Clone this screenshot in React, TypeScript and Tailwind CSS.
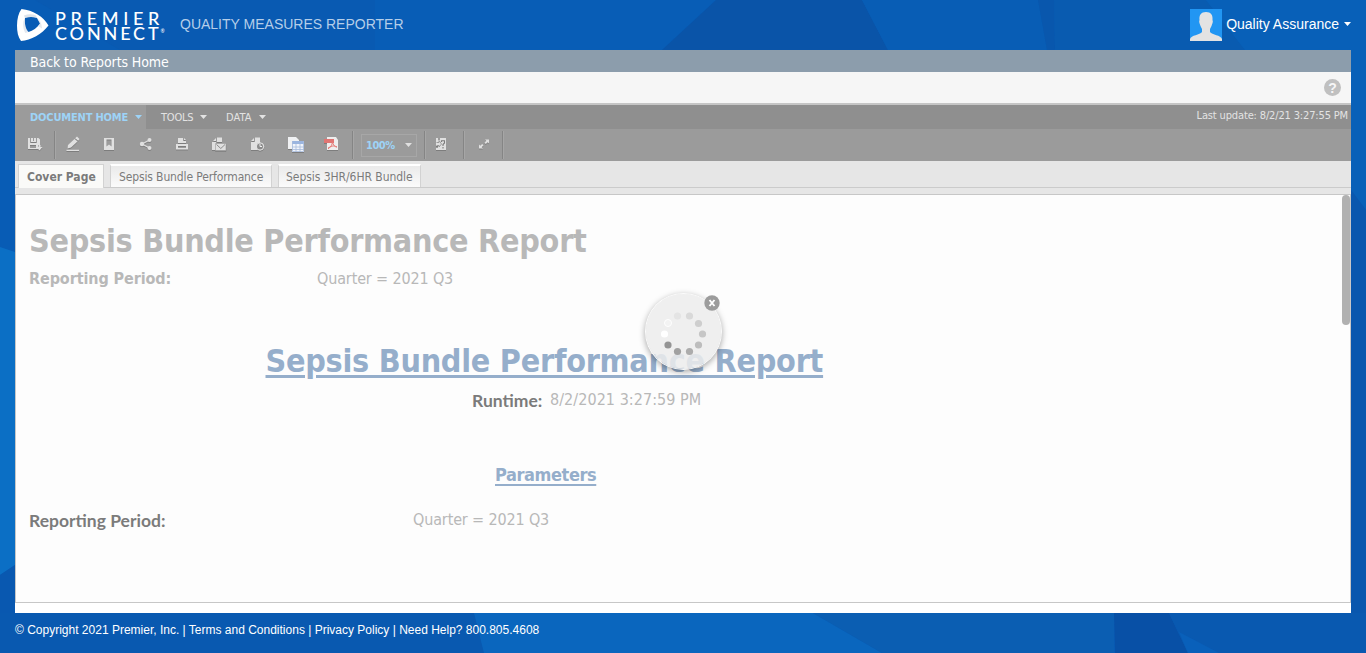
import React from "react";

const tahoma = "font-['DejaVu_Sans_Condensed','DejaVu_Sans',sans-serif] font-stretch-condensed";
const arial = "font-['Liberation_Sans',Arial,sans-serif]";
const lato = "font-['Lato','Noto_Sans',sans-serif]";

function Backdrop() {
  return (
    <svg className="absolute inset-0 h-full w-full" viewBox="0 0 1366 653" preserveAspectRatio="none" aria-hidden="true">
      <rect width="1366" height="653" fill="#085cb5" />
      <path d="M0 0H375V50H120L35 0Z" fill="#0958af" opacity="0.5" />
      <path d="M375 0H716L662 50H375Z" fill="#085db6" />
      <path d="M716 0H862L888 50H662Z" fill="#0a54a8" />
      <path d="M862 0H1038L1047 50H888Z" fill="#085db5" />
      <path d="M1038 0H1054L1055 50H1047Z" fill="#0957ad" />
      <path d="M1054 0H1206L1245 50H1055Z" fill="#095bb0" />
      <path d="M1206 0H1366V50H1245Z" fill="#0860b8" />
      <path d="M0 247L15 252V565L0 575Z" fill="#0b6fc5" />
      <path d="M0 575L15 565V653H0Z" fill="#0958b0" />
      <path d="M1351 50H1366V210L1351 190Z" fill="#0860b8" />
      <path d="M1351 190L1366 210V653H1351Z" fill="#0957ae" />
      <path d="M0 613H474L484 653H0Z" fill="#0959b0" />
      <path d="M474 613H813L882 653H484Z" fill="#0a66be" />
      <path d="M813 613H1114V653H882Z" fill="#0b5eb2" />
      <path d="M1114 613H1169L1188 653H1115Z" fill="#0850a6" />
      <path d="M1169 613H1366V653H1188Z" fill="#0959b0" />
      <path d="M1179 632L1219 653H1188Z" fill="#0960ba" />
    </svg>
  );
}

function Logo() {
  return (
    <div className="flex h-[34px] w-[165px] items-start pl-[17px]">
      <svg width="32" height="33" viewBox="0 0 32 33" className="shrink-0">
        <path fillRule="evenodd" fill="#fff" d="M4.500 0C1.500 4 0 10 0 16.500S1 28 4 32C14 31.500 25 25 31.500 16.500 27 8 16 1 4.500 0ZM8 9C12 7.500 16 7.500 20 9L23 14.500C20 19 16 21.500 11.500 23 8.500 20 7.500 15 8 9Z" />
        <path d="M8 9C12 7.500 16 7.500 20 9L19 6.500C15 4.500 11 5 7 6.500Z" fill="#b9c7d8" opacity="0.5" />
        <path d="M11.500 23C8.500 20 7.500 15 8 9L6.500 12C5.500 17 7 22 8.500 24Z" fill="#c5d0de" opacity="0.5" />
        <path d="M20 9L23 14.500L21 17L25 19.500C25 15 23 11 20 9Z" fill="#c5d0de" opacity="0.45" />
      </svg>
      <div className={`${lato} ml-[6px] flex shrink-0 flex-col pt-[2px] text-[18px] font-medium leading-[14.500px] text-white`}>
        <span className="tracking-[4.700px]">PREMIER</span>
        <span className="flex whitespace-nowrap"><span className="tracking-[2.850px]">CONNECT</span><span className="-ml-[1px] text-[5px] leading-[10px]">®</span></span>
      </div>
    </div>
  );
}

function Caret({ className = "" }: { className?: string }) {
  return <svg className={`shrink-0 ${className}`} width="7" height="4" viewBox="0 0 7 4"><path d="M0 0H7L3.500 4Z" fill="currentColor" /></svg>;
}

function Sep() {
  return <div className="h-[28px] w-[2px] border-l border-[#858585] bg-[#a6a6a6]" />;
}

function ToolIcon({ box, children }: { box: string; children: React.ReactNode }) {
  return (
    <div className={`flex shrink-0 justify-center ${box}`}>
      <svg width="16" height="16" viewBox="0 0 16 16" fill="#e0e0e0" className="-mt-[2px] drop-shadow-[0_1px_0_#7d7d7d]">{children}</svg>
    </div>
  );
}

function Toolbar() {
  return (
    <div className="flex h-8 items-center bg-[#9b9b9b] text-[#e0e0e0]">
      <ToolIcon box="w-[39px]">
        <path fillRule="evenodd" d="M1 2H3V7H10V2H11.500L13 3.500V9H11V13H1ZM4 2H6V5H7V2H9V6H4ZM3 9V12H9V9Z" />
        <path d="M11.500 9H13.500V11H15.500L12.500 14.500 9.500 11H11.500Z" />
      </ToolIcon>
      <Sep />
      <ToolIcon box="w-[34px]">
        <path d="M3 9L9.500 3 12.500 5.500 6 11.500 2.500 12.500ZM10.200 2.200L12 .5 14.500 3 13.200 4.800ZM1.500 13.800H14V15H1.500Z" />
      </ToolIcon>
      <ToolIcon box="w-[38px]">
        <path fillRule="evenodd" d="M3 2H13V14H3ZM5.500 3.500V10.500L8 8.500 10.500 10.500V3.500Z" />
      </ToolIcon>
      <ToolIcon box="w-[36px]">
        <path d="M4 8L11.500 4M4 8L11.500 12" stroke="#e0e0e0" strokeWidth="1.200" />
        <circle cx="4" cy="8" r="2.200" /><circle cx="11.500" cy="4" r="2" /><circle cx="11.500" cy="12" r="2" />
      </ToolIcon>
      <ToolIcon box="w-[36px]">
        <path d="M4 7V2H9V5H12V7ZM10 2L12 4H10Z" />
        <path fillRule="evenodd" d="M2 8H14V13.500H2ZM4 10V12H12V10Z" />
      </ToolIcon>
      <ToolIcon box="w-[38px]">
        <path d="M2 5L5 2V5ZM6 1.500H11V6H5V14H1V6H6Z" />
        <path d="M4.500 7.500H15V14.500H4.500Z" stroke="#999" strokeWidth=".6" />
        <path d="M5.500 8.500L9.800 12.500 14 8.500" fill="none" stroke="#8b8b8b" />
      </ToolIcon>
      <ToolIcon box="w-[38px]">
        <path d="M2 5L5 2V5ZM6 1.500H11V7H8V14H2V6H6Z" />
        <circle cx="11" cy="10.500" r="3.700" stroke="#e0e0e0" /><circle cx="11" cy="10.500" r="3" fill="#8b8b8b" />
        <path d="M11 8V10.500H13" fill="none" stroke="#eee" />
      </ToolIcon>
      <ToolIcon box="w-[40px]">
        <path d="M0 1H8L11 4V13H0Z" fill="#f0f1f3" />
        <rect x="4" y="5" width="12" height="11" fill="#f2f5fb" />
        <rect x="4" y="5" width="12" height="3" fill="#9bb5df" />
        <path d="M4.500 5V15.500H15.500V5M8 8V16M12 8V16M4 11H16M4 13.500H16" fill="none" stroke="#a7bbdc" strokeWidth=".8" />
      </ToolIcon>
      <ToolIcon box="w-[31px]">
        <path d="M3 1H12L14 4V14H3Z" fill="#eee" />
        <rect y="3" width="10" height="4" fill="#e07573" />
        <path d="M4 12C7 11 8 9 8.500 6 9 9 11 11 13 11 9 9 7 10 4 13" fill="none" stroke="#e77a76" />
      </ToolIcon>
      <div className="ml-[5px]"><Sep /></div>
      <div className={`${tahoma} ml-[7px] flex h-[23px] w-[56px] items-center border border-[#a7a7a7] pl-1 text-[11px] text-[#9dd3f7]`}>
        <b className="w-[39px] text-[11px] leading-none tracking-[-.5px]">100%</b><Caret className="text-[#e0e0e0]" />
      </div>
      <div className="ml-[7px]"><Sep /></div>
      <ToolIcon box="w-[30px]">
        <path d="M3 2H5V4H7V2H13V14H3V12H5V10H3Z" />
        <path d="M3.500 6.500H6V4.500L8.500 8 6 11V9.500H3.500" fill="none" stroke="#8b8b8b" strokeWidth=".8" />
        <path d="M8.500 6V4.800H11.500V7L10 8.500V10M10 11V12.500" fill="none" stroke="#7b7b7b" strokeWidth="1.100" />
      </ToolIcon>
      <div className="ml-[7px]"><Sep /></div>
      <ToolIcon box="w-[37px]">
        <path d="M9 3.500H13V7.500L11.700 6.200 9.800 8 8.500 6.700 10.300 4.800ZM3 8.500L4.300 9.800 6.200 8 7.500 9.300 5.700 11.200 7 12.500H3Z" />
      </ToolIcon>
      <Sep />
    </div>
  );
}

const dots = [
  [698.5, 323.5, "#cecece"], [702.5, 334, "#c6c6c6"], [698.5, 345, "#bdbdbd"], [689.5, 351.5, "#acacac"],
  [677.5, 351.5, "#a1a1a1"], [668, 345, "#949494"], [664.5, 334, "#ffffff"], [668, 323, "#f3f3f3"],
  [677.5, 316, "#e4e4e4"], [689.5, 316, "#d9d9d9"],
] as const;

function Spinner() {
  return (
    <div className="absolute left-[646px] top-[294px] h-[75px] w-[75px] rounded-full bg-[#ececec]/85 shadow-[0_0_0_1px_#fbfbfb,0_2px_6px_1px_rgba(0,0,0,0.35)]">
      <svg className="absolute -left-[12px] -top-[12px]" width="100" height="100" viewBox="634 282 100 100">
        {dots.map(([x, y, c]) => <circle key={`${x}-${y}`} cx={x} cy={y} r="3.600" fill={c} />)}
        <circle cx="668" cy="323" r="3.500" fill="none" stroke="#fff" />
        <circle cx="712" cy="303" r="7.700" fill="#9c9c9c" />
        <path d="M709.500 300L714.500 306M714.500 300L709.500 306" stroke="#fff" strokeWidth="1.900" />
      </svg>
    </div>
  );
}

export default function App() {
  return (
    <div className={`${arial} relative h-[653px] w-[1366px] overflow-hidden`}>
      <Backdrop />
      <div className="relative flex h-full flex-col">
        <header className="flex h-[50px] shrink-0 items-start pr-[15px] pt-[9px]">
          <Logo />
          <span className="ml-[15px] mt-[6px] text-[14px] leading-[18px] text-[#b5cee9]">QUALITY MEASURES REPORTER</span>
          <div className="ml-auto flex h-8 items-center text-[14px] text-white">
            <svg width="32" height="32" viewBox="0 0 32 32" className="mr-[4px]">
              <rect width="32" height="32" fill="#2196f3" />
              <path d="M16 3C11 3 9 6 9.500 11 8.500 13 10 15 10.500 17L12 20V23C10 26 1 26 0 30V32H32V30C31 26 22 26 20 23V20L21.500 17C22 15 23.500 13 22.500 11 23 6 21 3 16 3Z" fill="#e3e3e3" />
            </svg>
            <span className="mr-[5px] h-8 leading-[30px]">Quality Assurance</span><Caret className="-mt-[2px]" />
          </div>
        </header>
        <main className="mx-[15px] flex h-[563px] flex-col bg-white">
          <div className={`${tahoma} h-[22px] bg-[#8c9dac] pl-[15px] text-[14px] leading-[24px] tracking-[-.1px] text-white`}>Back to Reports Home</div>
          <div className="flex h-[33px] items-start justify-end border-b-2 border-[#c5c5c5] bg-[#f6f6f6] pr-[10px] pt-[7px]">
            <span className="flex h-[17px] w-[17px] items-center justify-center rounded-full bg-[#c0c0c0] text-[14px] font-bold leading-none text-[#f6f6f6]">?</span>
          </div>
          <nav className={`${tahoma} flex h-6 bg-[#8f8f8f] text-[11px] leading-[25px] text-[#e3e3e3]`}>
            <div className="flex w-[131px] items-center bg-[#9b9b9b] pl-[15px] text-[#9dd3f7]"><b className="w-[105px] tracking-[-.170px]">DOCUMENT HOME</b><Caret /></div>
            <div className="flex w-[65px] items-center pl-[15px]"><span className="w-[39px] tracking-[-.2px]">TOOLS</span><Caret /></div>
            <div className="flex items-center pl-[15px]"><span className="w-[33px] tracking-[.1px]">DATA</span><Caret /></div>
            <span className="ml-auto pr-[3px] leading-[21px] tracking-[-.150px]">Last update: 8/2/21 3:27:55 PM</span>
          </nav>
          <Toolbar />
          <div className={`${tahoma} h-[33px] bg-[#e6e6e6] pt-[3px] text-[12px] text-[#7b7b7b]`}>
            <div className="flex h-6 gap-[6px] border-b border-[#cbcbcb] pl-[3px]">
              <b className="h-6 w-[86px] border-x border-t border-[#d2d2d2] bg-[#fafaf8] pl-[8px] leading-[25px]">Cover Page</b>
              <span className="w-[162px] border-x border-t-2 border-x-[#d2d2d2] border-t-white bg-linear-to-b from-[#eaeaea] to-[#fbfbfb] pl-[8px] leading-[22px] tracking-[-.130px]">Sepsis Bundle Performance</span>
              <span className="w-[143px] border-x border-t-2 border-x-[#d2d2d2] border-t-white bg-linear-to-b from-[#eaeaea] to-[#fbfbfb] pl-[7px] leading-[22px] tracking-[-.050px]">Sepsis 3HR/6HR Bundle</span>
            </div>
          </div>
          <section className={`${tahoma} flex h-[409px] justify-between border border-[#c7c7c7] bg-[#fdfdfd] text-[#b8b8b8]`}>
            <div className="flex w-[1100px] flex-col whitespace-nowrap pl-[13px]">
              <h1 className="mt-[26px] h-[40px] text-[32px] font-bold leading-[40px] tracking-[-.260px]">Sepsis Bundle Performance Report</h1>
              <div className="mt-[6px] flex h-[24px] text-[16px] leading-[24px] tracking-[-.1px]"><b className="w-[288px]">Reporting Period:</b><span className="tracking-[-.140px]">Quarter = 2021 Q3</span></div>
              <h2 className="ml-[236.500px] mt-[50px] h-[40px] w-[557px] text-[32px] font-bold leading-[40px] tracking-[-.260px] text-[#95aecb] underline decoration-[3px] underline-offset-[3px]">Sepsis Bundle Performance Report</h2>
              <div className="ml-[443px] mt-[7px] flex h-[24px] text-[16px] leading-[24px]"><b className={`${lato} w-[78px] pt-px text-[17.500px] text-[#7b7b7b]`}>Runtime:</b><span className="tracking-[.050px]">8/2/2021 3:27:59 PM</span></div>
              <h3 className="ml-[466px] mt-[51px] h-[24px] text-[18px] font-bold leading-[24px] tracking-[-.420px] text-[#95aecb] underline decoration-2 underline-offset-[3px]">Parameters</h3>
              <div className="mt-[21px] flex h-[24px] text-[16px] leading-[24px]"><b className={`${lato} w-[384px] pt-px text-[17.500px] text-[#7b7b7b]`}>Reporting Period:</b><span className="tracking-[-.140px]">Quarter = 2021 Q3</span></div>
            </div>
            <div className="h-[130px] w-[8px] rounded-full bg-[#b1b1b1]" />
          </section>
        </main>
        <footer className="pl-[15px] pt-[9px] text-[12px] leading-[16px] text-white">© Copyright 2021 Premier, Inc. | Terms and Conditions | Privacy Policy | Need Help? 800.805.4608</footer>
      </div>
      <Spinner />
    </div>
  );
}
